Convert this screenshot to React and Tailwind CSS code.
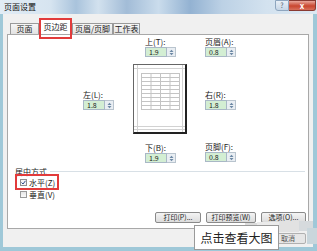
import React from 'react';

const font = { fontFamily: '"Noto Sans CJK SC", "Liberation Sans", sans-serif' };

const SpinInput = ({ value }) => (
  <div className="flex h-[10px] w-[31px]">
    <div className="flex flex-1 items-center overflow-hidden border border-[#a9b8c6] bg-[#d3eed3] pl-[3px] text-[7px] leading-[7px] text-[#222]">
      {value}
    </div>
    <div className="flex w-[9px] items-center justify-center border border-l-0 border-[#b9c4ce] bg-[#e9eef3]">
      <svg width="5" height="7" viewBox="0 0 5 7">
        <path d="M0.5 3 L2.5 0.8 L4.5 3 Z" fill="#6c88a4" />
        <path d="M0.5 4 L2.5 6.2 L4.5 4 Z" fill="#6c88a4" />
      </svg>
    </div>
  </div>
);

const Field = ({ label, value }) => (
  <div className="flex flex-col">
    <span className="whitespace-nowrap text-[8px] leading-[9px] text-[#222]">{label}</span>
    <div className="mt-[1px]">
      <SpinInput value={value} />
    </div>
  </div>
);

const Tab = ({ label, width }) => (
  <div
    className="flex h-[11px] items-center justify-center whitespace-nowrap border border-b-0 border-[#9a9a9a] bg-[linear-gradient(#f6f6f6,#e2e2e2)] text-[8px] leading-[8px] text-[#222]"
    style={{ width }}
  >
    {label}
  </div>
);

const PagePreview = () => (
  <div className="h-[70px] w-[54px] border border-[#666] border-b-2 border-r-2 border-b-[#222] border-r-[#222] bg-white">
    <svg width="51" height="67" viewBox="0 0 51 67">
      <g stroke="#d2d2d2" strokeWidth="1">
        <line x1="3.5" y1="0" x2="3.5" y2="67" />
        <line x1="48.5" y1="0" x2="48.5" y2="67" />
        <line x1="0" y1="3.5" x2="51" y2="3.5" />
        <line x1="0" y1="61.5" x2="51" y2="61.5" />
        <line x1="0" y1="64.5" x2="51" y2="64.5" />
      </g>
      <g stroke="#c4c4c4" strokeWidth="1">
        {[0, 1, 2, 3, 4].map((i) => (
          <line key={'v' + i} x1={7.5 + i * 9.5} y1="8" x2={7.5 + i * 9.5} y2="45" />
        ))}
        {[0, 1, 2, 3, 4, 5, 6, 7, 8, 9].map((i) => (
          <line key={'h' + i} x1="7" y1={8.5 + i * 4} x2="46" y2={8.5 + i * 4} />
        ))}
      </g>
    </svg>
  </div>
);

const Button = ({ label, width }) => (
  <div
    className="flex h-[11px] items-center justify-center whitespace-nowrap rounded-[2px] border border-[#8a8a8a] bg-[linear-gradient(#f4f4f4,#dcdcdc)] text-[7px] leading-[7px] text-[#222]"
    style={{ width }}
  >
    {label}
  </div>
);

export default function App() {
  return (
    <div
      className="relative flex h-[251px] w-[317px] flex-col overflow-hidden bg-[#9fc8d8]"
      style={font}
    >
      {/* title bar */}
      <div className="relative flex h-[14px] items-center bg-[linear-gradient(90deg,#e2ecf5_0%,#d6e4f0_16%,#a9c3dc_24%,#d2e1ee_31%,#a2bcd7_40%,#cadcec_50%,#93b2d2_60%,#bcd1e5_70%,#d3e2ef_84%,#dde8f2_100%)] pl-[4px]">
        <span className="text-[8px] leading-[8px] text-[#111]">页面设置</span>
        <div className="ml-auto flex h-[11px] self-start">
          <div className="flex w-[14px] items-center justify-center rounded-bl-[3px] border border-[#8ea6bf] bg-[linear-gradient(#e8eff6,#c6d6e6)] text-[7px] leading-[7px] text-[#4a5d72]">
            ?
          </div>
          <div className="mr-[1px] flex w-[27px] items-center justify-center rounded-br-[3px] border border-l-0 border-[#8a3a32] bg-[linear-gradient(#e9a79b,#c9462f_55%,#d8705c)] text-[8px] font-bold leading-[8px] text-white">
            x
          </div>
        </div>
      </div>

      {/* dialog body */}
      <div className="ml-[3px] mr-[4px] flex flex-1 flex-col bg-[#f0f0f0] px-[4px]">
        {/* tabs */}
        <div className="flex h-[20px] items-end pl-[3px]">
          <Tab label="页面" width={29} />
          <div className="relative ml-[1px] flex h-[16px] w-[31px] items-center justify-center whitespace-nowrap border border-b-0 border-[#9a9a9a] bg-white text-[8px] leading-[8px] text-[#222]">
            页边距
            <div className="absolute -left-[2px] -right-[2px] -top-[1px] -bottom-[5px] border-2 border-[#e23b3b]" />
          </div>
          <div className="ml-[1px]">
            <Tab label="页眉/页脚" width={41} />
          </div>
          <Tab label="工作表" width={27} />
        </div>

        {/* panel */}
        <div className="flex h-[195px] flex-col border border-[#a8a8a8] bg-white">
          <div className="flex">
            <div className="w-[125px] pl-[75px] pt-[55px]">
              <Field label="左(L):" value="1.8" />
            </div>
            <div className="flex w-[54px] flex-col pt-[2px]">
              <div className="pl-[12px]">
                <Field label="上(T):" value="1.9" />
              </div>
              <div className="mt-[7px]">
                <PagePreview />
              </div>
              <div className="mt-[9px] pl-[12px]">
                <Field label="下(B):" value="1.9" />
              </div>
            </div>
            <div className="ml-[18px] flex flex-col pt-[2px]">
              <Field label="页眉(A):" value="0.8" />
              <div className="mt-[33px]">
                <Field label="右(R):" value="1.8" />
              </div>
              <div className="mt-[32px]">
                <Field label="页脚(F):" value="0.8" />
              </div>
            </div>
          </div>

          {/* centering group */}
          <div className="mt-[4px] flex items-center pl-[7px] pr-[3px]">
            <span className="text-[8px] leading-[9px] text-[#222]">居中方式</span>
            <div className="ml-[3px] h-px flex-1 bg-[#d8e0e6]" />
          </div>
          <div className="relative mt-[2px] ml-[12px] flex w-fit items-center">
            <div className="flex h-[7px] w-[7px] items-center justify-center border border-[#8f8f8f] bg-[#f4f4f4]">
              <svg width="5" height="5" viewBox="0 0 5 5">
                <path d="M0.5 2.5 L2 4 L4.5 0.8" stroke="#2a4a8a" strokeWidth="1" fill="none" />
              </svg>
            </div>
            <span className="ml-[2px] text-[8px] leading-[9px] text-[#222]">水平(Z)</span>
            <div className="absolute -left-[5px] -right-[4px] -top-[4px] -bottom-[3px] border-2 border-[#e23b3b]" />
          </div>
          <div className="mt-[3px] ml-[12px] flex items-center">
            <div className="h-[7px] w-[7px] border border-[#9a9a9a] bg-[linear-gradient(#e6e6e6,#fafafa)]" />
            <span className="ml-[2px] text-[8px] leading-[9px] text-[#222]">垂直(V)</span>
          </div>

          <div className="mt-auto mb-[5px] flex justify-end gap-[5px] pr-[2px]">
            <Button label="打印(P)..." width={46} />
            <Button label="打印预览(W)" width={50} />
            <Button label="选项(O)..." width={45} />
          </div>
        </div>

        {/* bottom buttons row */}
        <div className="flex flex-1 items-center justify-end pr-[3px]">
          <div className="flex h-[11px] w-[36px] items-center justify-center rounded-[2px] border border-[#b0b0b0] bg-[#e6e6e6] text-[7px] leading-[7px] text-[#555]">
            取消
          </div>
        </div>
      </div>
      <div className="h-[4px]" />

      {/* mosaic blur */}
      <div className="absolute left-[245px] top-[223px] h-[10px] w-[12px] bg-[#dcdcdc]" />
      <div className="absolute left-[257px] top-[222px] h-[8px] w-[22px] bg-[#ebebeb]" />
      <div className="absolute left-[279px] top-[221px] h-[11px] w-[20px] bg-[#e2e2e2]" />
      <div className="absolute left-[299px] top-[221px] h-[10px] w-[14px] bg-[#d6dadd]" />
      <div className="absolute left-[307px] top-[228px] h-[16px] w-[10px] bg-[#c9d6dc]" />

      {/* overlay */}
      <div className="absolute left-[194px] top-[225px] flex h-[25px] w-[85px] items-center justify-center border border-[#9a9a9a] bg-white text-[12px] leading-[12px] text-[#222]">
        点击查看大图
      </div>
    </div>
  );
}
